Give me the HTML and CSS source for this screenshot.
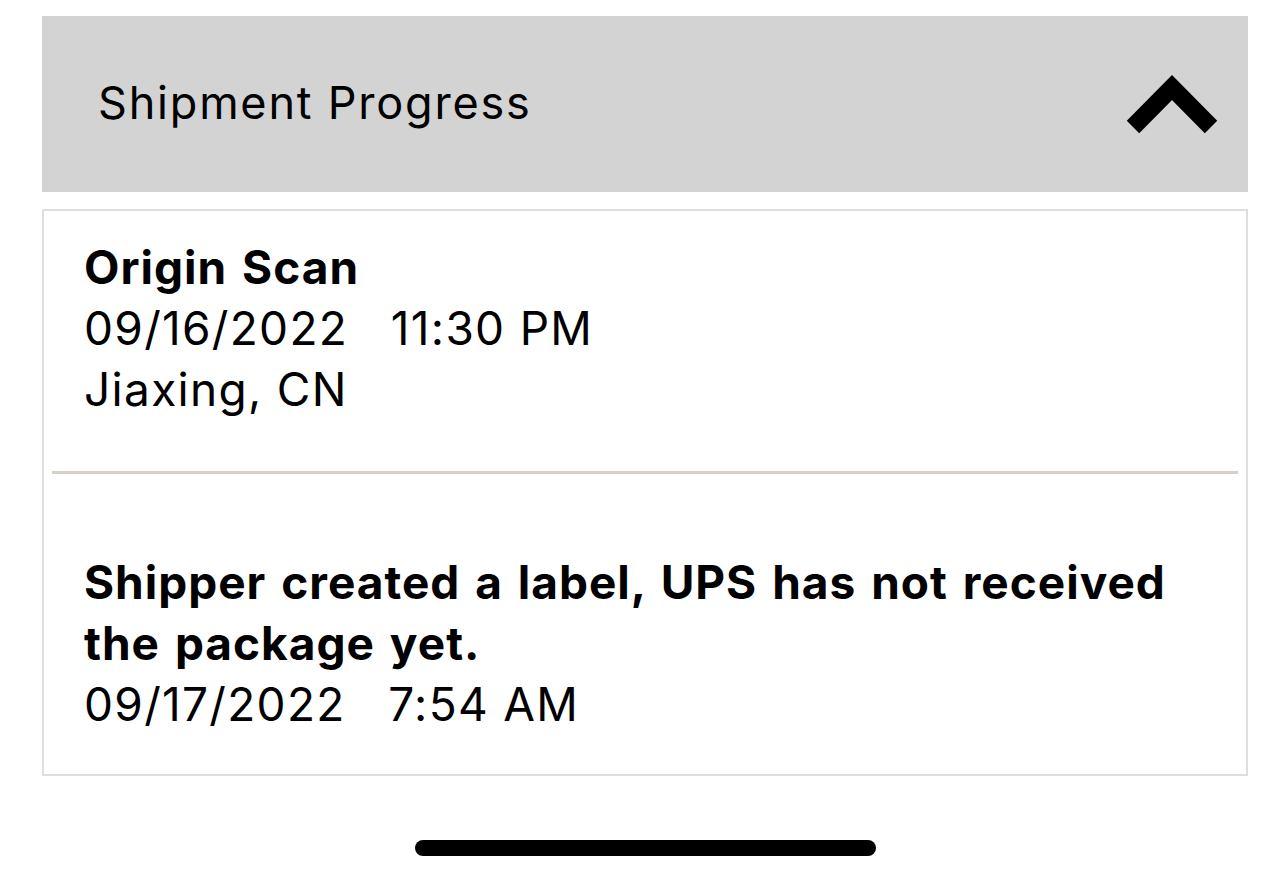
FILE: index.html
```html
<!DOCTYPE html>
<html lang="en">
<head>
<meta charset="utf-8">
<title>Shipment Progress</title>
<link rel="stylesheet" href="styles.css">
</head>
<body>
<main class="page">
  <header class="panel-head">
    <h1 class="panel-title">Shipment Progress</h1>
    <svg class="chevron" viewBox="0 0 100 70" width="100" height="70" aria-hidden="true">
      <polyline points="11,57 50,17.5 89,57" fill="none" stroke="#000" stroke-width="17.5" stroke-linecap="butt" stroke-linejoin="miter"/>
    </svg>
  </header>
  <section class="card">
    <div class="event event-first">
      <div class="event-title">Origin Scan</div>
      <div class="event-line">09/16/2022&nbsp;&nbsp;&nbsp;11:30 PM</div>
      <div class="event-line">Jiaxing, CN</div>
    </div>
    <hr class="sep">
    <div class="event event-second">
      <div class="event-title">Shipper created a label, UPS has not received the package yet.</div>
      <div class="event-line">09/17/2022&nbsp;&nbsp;&nbsp;7:54 AM</div>
    </div>
  </section>
  <div class="home-row"><div class="home-bar"></div></div>
</main>
</body>
</html>
```
FILE: styles.css
```css
html, body {
  margin: 0;
  padding: 0;
  background: #ffffff;
}
.page {
  padding: 16px 36px 0 42px;
  font-family: Inter, "Liberation Sans", Arial, sans-serif;
  color: #000;
}
.panel-head {
  height: 176px;
  background: #d3d3d3;
  display: flex;
  align-items: center;
  justify-content: space-between;
  padding: 0 26px 0 56px;
  box-sizing: border-box;
}
.panel-title {
  margin: 0;
  font-family: Inter, "Liberation Sans", sans-serif;
  font-weight: 400;
  font-size: 45px;
  letter-spacing: 1.8px;
  line-height: 1;
  position: relative;
  top: -2px;
}
.chevron {
  display: block;
  position: relative;
  top: 1px;
}
.card {
  margin-top: 17px;
  border: 2px solid #dedede;
  background: #fff;
}
.event {
  padding-left: 40px;
  padding-right: 40px;
  font-size: 46px;
  line-height: 61px;
  letter-spacing: 1.3px;
}
.event-first {
  padding-top: 26px;
  padding-bottom: 51px;
}
.event-second {
  padding-top: 78px;
  padding-bottom: 39px;
}
.event-title {
  font-weight: 700;
  font-size: 46px;
  letter-spacing: 1px;
  word-spacing: 3px;
}
.sep {
  margin: 0 8px;
  border: 0;
  height: 3px;
  background: #d6d0cb;
}
.home-row {
  display: flex;
  justify-content: center;
  margin-top: 64px;
}
.home-bar {
  width: 461px;
  height: 16px;
  border-radius: 8px;
  background: #000;
}
```
